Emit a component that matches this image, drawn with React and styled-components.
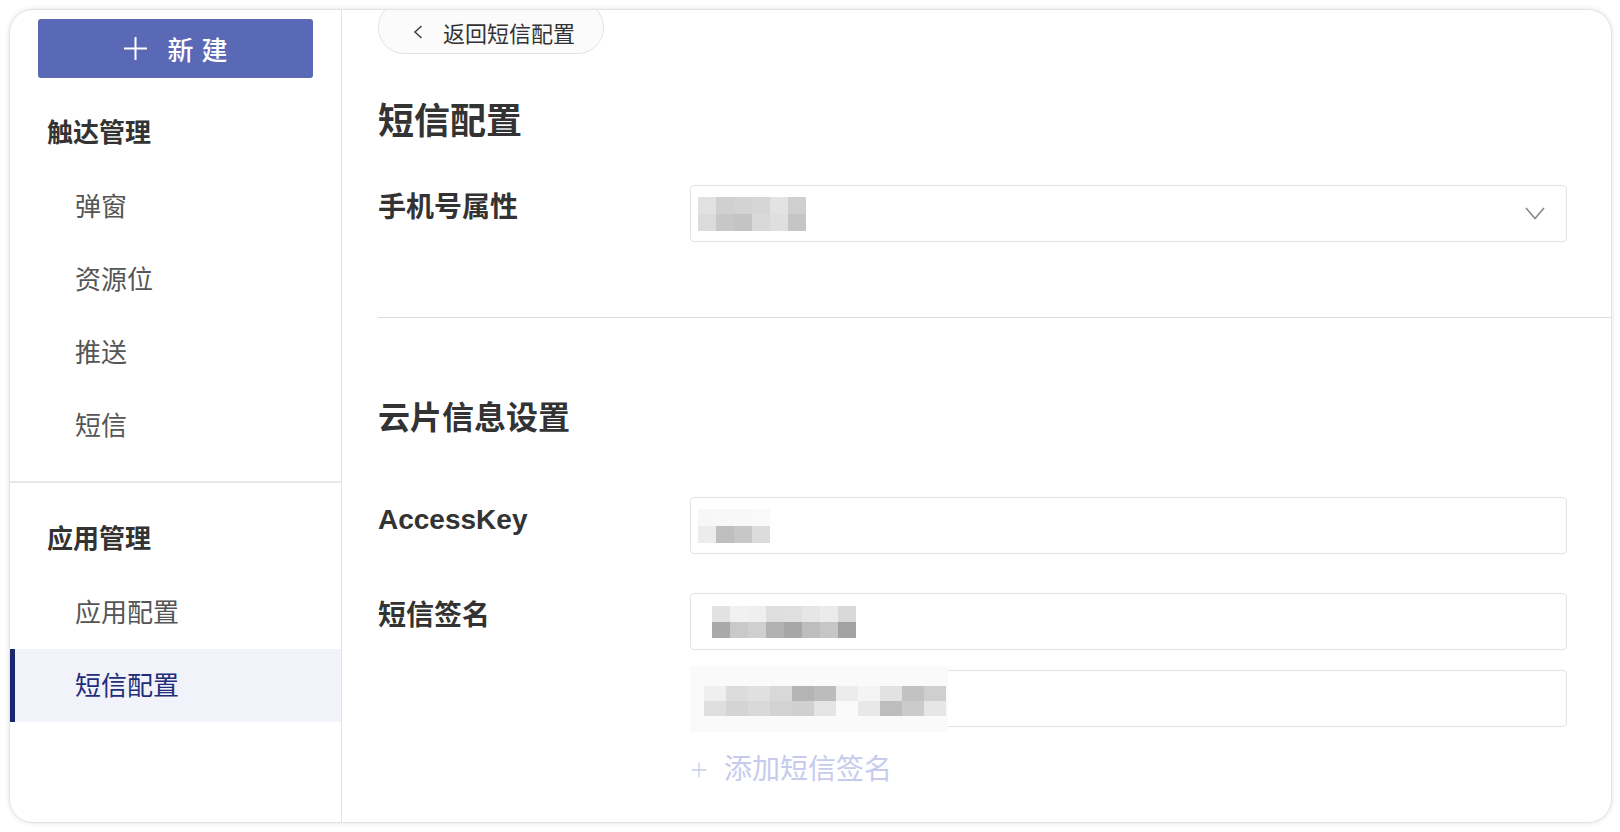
import React from "react";
import styled, { createGlobalStyle } from "styled-components";

const Global = createGlobalStyle`
  html, body { margin: 0; padding: 0; background: #ffffff; }
  body { font-family: "Liberation Sans", "Noto Sans CJK SC", sans-serif; color: #333; }
  * { box-sizing: border-box; }
`;

const Page = styled.div`
  padding: 9px 8px 9px 9px;
  width: 1620px;
  height: 832px;
`;

const Card = styled.div`
  display: flex;
  width: 1603px;
  height: 814px;
  background: #fff;
  border: 1px solid #e4e4e4;
  border-radius: 24px;
  box-shadow: 0 0 5px rgba(0, 0, 0, 0.12);
  overflow: hidden;
`;

const Sidebar = styled.nav`
  width: 332px;
  flex: none;
  border-right: 1px solid #e3e3e3;
  display: flex;
  flex-direction: column;
`;

const NewButton = styled.button`
  margin: 9px 28px 19px;
  height: 59px;
  border: none;
  border-radius: 3px;
  background: #5a69b5;
  color: #fff;
  display: flex;
  align-items: center;
  justify-content: center;
  gap: 19px;
  font-family: inherit;
  font-size: 26px;
  font-weight: 500;
  letter-spacing: 8px;
  padding: 0 0 0 8px;
  cursor: pointer;
`;

const GroupTitle = styled.div`
  height: 73px;
  line-height: 73px;
  padding-left: 37px;
  font-size: 26px;
  font-weight: 700;
  color: #333;
`;

const NavItem = styled.div`
  height: 73px;
  line-height: 75px;
  padding-left: ${(p) => (p.$active ? "60px" : "65px")};
  font-size: 26px;
  color: ${(p) => (p.$active ? "#1f2e78" : "#555")};
  background: ${(p) => (p.$active ? "#f1f2fa" : "transparent")};
  border-left: ${(p) => (p.$active ? "5px solid #1c286e" : "none")};
`;

const SideDivider = styled.div`
  height: 2px;
  background: #e8e8e8;
  margin: 19px 0 20px;
`;

const Main = styled.main`
  flex: 1;
  padding-left: 36px;
  display: flex;
  flex-direction: column;
  align-items: flex-start;
`;

const BackPill = styled.button`
  margin-top: -9px;
  height: 53px;
  padding: 9px 28px 0 34px;
  border: 1px solid #e2e2e2;
  border-radius: 26px;
  background: #fbfbfb;
  display: flex;
  align-items: center;
  gap: 20px;
  font-family: inherit;
  font-size: 22px;
  color: #333;
  cursor: pointer;
`;

const PageTitle = styled.h1`
  margin: 43px 0 0;
  font-size: 36px;
  line-height: 50px;
  font-weight: 700;
  color: #333;
`;

const SectionTitle = styled.h2`
  margin: 78px 0 0;
  font-size: 32px;
  line-height: 44px;
  font-weight: 700;
  color: #333;
`;

const Divider = styled.div`
  align-self: stretch;
  height: 1px;
  background: #dcdcdc;
  margin-top: 75px;
`;

const FormRow = styled.div`
  align-self: stretch;
  display: grid;
  grid-template-columns: 312px 1fr;
  padding-right: 44px;
  margin-top: ${(p) => p.$mt}px;
`;

const Label = styled.div`
  font-size: 28px;
  line-height: 46px;
  font-weight: 700;
  color: #333;
`;

const Field = styled.div`
  display: flex;
  flex-direction: column;
  gap: 20px;
`;

const InputBox = styled.div`
  position: relative;
  height: 57px;
  border: 1px solid #e3e3e3;
  border-radius: 4px;
  background: #fff;
  display: flex;
  align-items: center;
  justify-content: space-between;
  padding: 0 21px 0 7px;
`;

const Redacted = styled.div`
  display: grid;
  grid-template-columns: repeat(${(p) => p.$cols}, ${(p) => p.$cw}px);
  grid-auto-rows: ${(p) => p.$rh}px;
  background: ${(p) => p.$bg || "transparent"};
  padding: ${(p) => p.$pad || "0"};
`;

const Cell = styled.span`
  display: block;
`;

const Overlay = styled.div`
  position: absolute;
  left: -1px;
  top: -5px;
  width: 258px;
  height: 66px;
  background: #fafafa;
  padding: 20px 0 0 14px;
`;

const AddLink = styled.div`
  margin-top: 3px;
  display: flex;
  align-items: center;
  gap: 17px;
  line-height: 40px;
  font-size: 28px;
  color: #c6cbee;
  padding-left: 1px;
`;

const Plus = ({ size, stroke, color }) => (
  <svg width={size} height={size} viewBox="0 0 25 25">
    <path d="M12.5 1v23M1 12.5h23" stroke={color} strokeWidth={stroke} fill="none" />
  </svg>
);

const Blur = ({ rows, cw, rh, bg, pad }) => (
  <Redacted $cols={rows[0].length} $cw={cw} $rh={rh} $bg={bg} $pad={pad}>
    {rows.flat().map((c, i) => (
      <Cell key={i} style={{ background: c }} />
    ))}
  </Redacted>
);

export default function App() {
  return (
    <>
      <Global />
      <Page>
        <Card>
          <Sidebar>
            <NewButton>
              <Plus size={25} stroke={2} color="#fff" />
              <span>新建</span>
            </NewButton>
            <GroupTitle>触达管理</GroupTitle>
            <NavItem>弹窗</NavItem>
            <NavItem>资源位</NavItem>
            <NavItem>推送</NavItem>
            <NavItem>短信</NavItem>
            <SideDivider />
            <GroupTitle>应用管理</GroupTitle>
            <NavItem>应用配置</NavItem>
            <NavItem $active>短信配置</NavItem>
          </Sidebar>
          <Main>
            <BackPill>
              <svg width="10" height="14" viewBox="0 0 10 14">
                <polyline points="8.5,1 2,7 8.5,13" fill="none" stroke="#444" strokeWidth="1.6" />
              </svg>
              返回短信配置
            </BackPill>
            <PageTitle>短信配置</PageTitle>
            <FormRow $mt={38}>
              <Label>手机号属性</Label>
              <Field>
                <InputBox>
                  <Blur
                    cw={18}
                    rh={17}
                    rows={[
                      ["#e1e1e1", "#d0d0d0", "#d3d3d3", "#d6d6d6", "#e3e3e3", "#cfcfcf"],
                      ["#dbdbdb", "#c7c7c7", "#c4c4c4", "#d9d9d9", "#dfdfdf", "#c5c5c5"],
                    ]}
                  />
                  <svg width="20" height="13" viewBox="0 0 20 13">
                    <polyline points="1,1 10,11.5 19,1" fill="none" stroke="#888" strokeWidth="1.6" />
                  </svg>
                </InputBox>
              </Field>
            </FormRow>
            <Divider />
            <SectionTitle>云片信息设置</SectionTitle>
            <FormRow $mt={57}>
              <Label>AccessKey</Label>
              <Field>
                <InputBox>
                  <Blur
                    cw={18}
                    rh={17}
                    rows={[
                      ["#f7f7f7", "#f8f8f8", "#f8f8f8", "#f9f9f9"],
                      ["#ececec", "#bfbfbf", "#c7c7c7", "#dcdcdc"],
                    ]}
                  />
                </InputBox>
              </Field>
            </FormRow>
            <FormRow $mt={39}>
              <Label>短信签名</Label>
              <Field>
                <InputBox>
                  <Blur
                    cw={18}
                    rh={16}
                    pad="0 0 0 14px"
                    rows={[
                      ["#e2e2e2", "#f1f1f1", "#efefef", "#dedede", "#e0e0e0", "#e6e6e6", "#ebebeb", "#d9d9d9"],
                      ["#a9a9a9", "#c9c9c9", "#cfcfcf", "#b1b1b1", "#a7a7a7", "#bdbdbd", "#c6c6c6", "#a2a2a2"],
                    ]}
                  />
                </InputBox>
                <InputBox>
                  <Overlay>
                    <Blur
                      cw={22}
                      rh={15}
                      rows={[
                        ["#efefef", "#dcdcdc", "#e0e0e0", "#d8d8d8", "#b4b4b4", "#bcbcbc", "#ececec", "#f4f4f4", "#e2e2e2", "#c2c2c2", "#cfcfcf"],
                        ["#dedede", "#d4d4d4", "#d9d9d9", "#d2d2d2", "#d0d0d0", "#e4e4e4", "#fafafa", "#e8e8e8", "#bdbdbd", "#cbcbcb", "#e6e6e6"],
                      ]}
                    />
                  </Overlay>
                </InputBox>
                <AddLink>
                  <Plus size={16} stroke={2} color="#c6cbee" />
                  <span>添加短信签名</span>
                </AddLink>
              </Field>
            </FormRow>
          </Main>
        </Card>
      </Page>
    </>
  );
}
